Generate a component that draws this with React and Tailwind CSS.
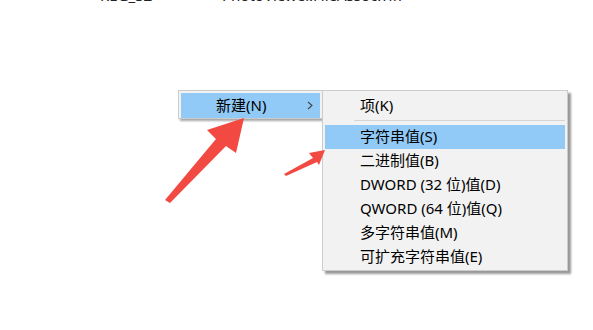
export default function App() {
  const font = { fontFamily: '"Noto Sans", "Noto Sans CJK SC", sans-serif' };
  const items = [
    "二进制值(B)",
    "DWORD (32 位)值(D)",
    "QWORD (64 位)值(Q)",
    "多字符串值(M)",
    "可扩充字符串值(E)",
  ];
  return (
    <div className="relative w-[593px] h-[330px] bg-white overflow-hidden text-[#000]" style={font}>
      <div className="flex mt-[-15px] text-[15px] leading-[20px] text-[#222]">
        <span className="pl-[100px] w-[222px]">REG_SZ</span>
        <span>PhotoViewer.FileAssoc.Tiff</span>
      </div>

      <div className="absolute left-[178px] top-[90px] w-[145px] h-[29px] p-[2px] bg-[#f2f2f2] border border-[#cccccc] shadow-[2px_2px_2px_rgba(0,0,0,0.35)]">
        <div className="flex items-center h-[25px] bg-[#91c9f7] text-[15px] leading-none">
          <span className="pl-[35px] flex-1">新建(N)</span>
          <svg className="mr-[7px]" width="6" height="9" viewBox="0 0 6 9">
            <path d="M1 1 L5 4.5 L1 8" fill="none" stroke="#444" strokeWidth="1.1" />
          </svg>
        </div>
      </div>

      <div className="absolute left-[322px] top-[90px] w-[246px] h-[181px] p-[2px] flex flex-col bg-[#f2f2f2] border border-[#cccccc] shadow-[3px_3px_2px_rgba(0,0,0,0.4)] text-[15px]">
        <div className="flex items-center h-[24px] pl-[35px]">项(K)</div>
        <div className="h-[8px] flex items-center pl-[29px]">
          <div className="h-px flex-1 bg-[#d4d4d4]" />
        </div>
        <div className="flex items-center h-[24px] pl-[35px] bg-[#91c9f7]">字符串值(S)</div>
        {items.map((t) => (
          <div key={t} className="flex items-center h-[24px] pl-[35px]">{t}</div>
        ))}
      </div>

      <svg className="absolute left-0 top-0" width="593" height="330">
        <polygon
          points="244,118 207,130 216,139 165,200 170,203 226,146 236,153"
          fill="#f24a42"
          strokeLinejoin="round"
        />
        <polygon
          points="325,150 309,153 313,158 284,174 286,176 317,162 319,165"
          fill="#f24a42"
          strokeLinejoin="round"
        />
      </svg>
    </div>
  );
}
